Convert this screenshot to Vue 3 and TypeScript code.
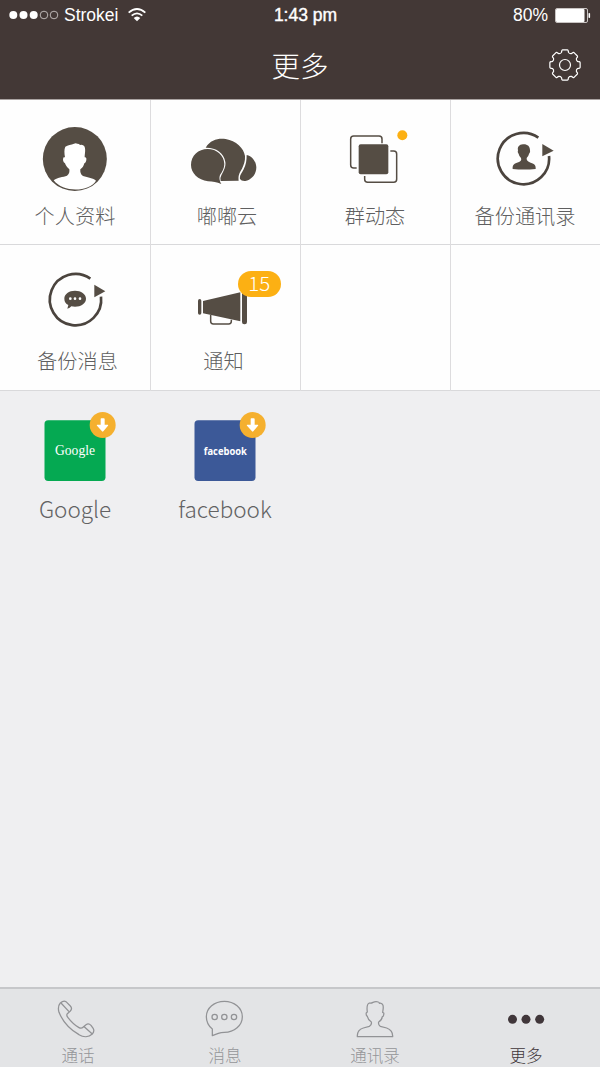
<script setup lang="ts">
interface Item {
  id: string
  label: string
}

const features: Item[] = [
  { id: 'profile', label: '个人资料' },
  { id: 'cloud', label: '嘟嘟云' },
  { id: 'group', label: '群动态' },
  { id: 'contacts', label: '备份通讯录' },
  { id: 'messages', label: '备份消息' },
  { id: 'notice', label: '通知' },
  { id: 'empty-a', label: '' },
  { id: 'empty-b', label: '' },
]

const apps: Item[] = [
  { id: 'google', label: 'Google' },
  { id: 'facebook', label: 'facebook' },
]

const tabs: Item[] = [
  { id: 'calls', label: '通话' },
  { id: 'chats', label: '消息' },
  { id: 'people', label: '通讯录' },
  { id: 'more', label: '更多' },
]

// Outline of the settings gear: eight teeth around a 48-unit centre.
function gearOutline(): string {
  const at = (r: number, deg: number): string => {
    const a = (deg * Math.PI) / 180
    return `${(50 + r * Math.sin(a)).toFixed(1)} ${(50 - r * Math.cos(a)).toFixed(1)}`
  }
  const parts: string[] = []
  for (let i = 0; i < 8; i++) {
    const c = i * 45
    parts.push(`${i === 0 ? 'M' : 'L'}${at(39, c - 16)}`)
    parts.push(`Q${at(41, c - 14)} ${at(42, c - 13.5)}`)
    parts.push(`Q${at(46, c - 13)} ${at(46, c - 9)}`)
    parts.push(`L${at(46, c + 9)}`)
    parts.push(`Q${at(46, c + 13)} ${at(42, c + 13.5)}`)
    parts.push(`Q${at(41, c + 14)} ${at(39, c + 16)}`)
    parts.push(`Q${at(36, c + 22.5)} ${at(39, c + 29)}`)
  }
  return parts.join(' ') + 'Z'
}
const gear = gearOutline()
</script>

<template>
  <div class="screen">
    <header class="header">
      <div class="status">
        <div class="carrier">
          <svg class="signal" width="50" height="10" viewBox="0 0 50 10">
            <circle cx="4.3" cy="5" r="4" fill="#fff" />
            <circle cx="14.5" cy="5" r="4" fill="#fff" />
            <circle cx="24.7" cy="5" r="4" fill="#fff" />
            <circle cx="35" cy="5" r="3.8" class="hollow" />
            <circle cx="45" cy="5" r="3.8" class="hollow" />
          </svg>
          <span class="carrier-name">Strokei</span>
          <svg class="wifi" width="18" height="14" viewBox="0 0 54 42">
            <path d="M2 14Q27 -8 52 14" class="wave" />
            <path d="M11 23Q27 9 43 23" class="wave" />
            <path d="M17 30Q27 21 37 30L27 40Z" fill="#fff" />
          </svg>
        </div>
        <span class="time">1:43 pm</span>
        <div class="power">
          <span>80%</span>
          <svg class="battery" width="36" height="15" viewBox="0 0 36 15">
            <rect x="0.5" y="0.5" width="32" height="14" rx="1.5" class="shell" />
            <rect x="1" y="1" width="28.5" height="13" rx="1" fill="#fff" />
            <path d="M34 5q1.7 2.500 5z" fill="#fff" />
            <rect x="33.500" y="5" width="1.600" height="5" rx="0.800" fill="#fff" />
          </svg>
        </div>
      </div>
      <div class="title-bar">
        <h1>更多</h1>
        <svg class="gear" width="34" height="34" viewBox="-1 -1 102 102">
          <path :d="gear" />
          <circle cx="50" cy="50" r="16.500" />
        </svg>
      </div>
    </header>

    <main class="features">
      <div v-for="f in features" :key="f.id" class="cell" :class="f.id">
        <svg class="art" width="150" height="100" viewBox="0 0 450 300">
          <g v-if="f.id === 'profile'">
            <circle cx="224.500" cy="177" r="96" fill="#554d44" />
            <path
              fill="#fff"
              d="M161 241C170 233 190 231 201 227C208 223 209 215 208 208C201 202 197 196 195 190C189 186 188 179 190 173C192 171 194 172 195 172C193 160 192 148 196 140C203 134 214 135 222 131Q227 129 232 131Q238 131 240 135Q249 133 253 139C258 148 254 162 254 172C258 171 260 174 259 180C258 186 256 189 253 190C251 198 248 203 241 208C240 216 242 224 249 228C264 233 280 234 288 242C270 275 190 280 161 241Z"
            />
          </g>
          <g v-else-if="f.id === 'cloud'" fill="#554d44">
            <path d="M167 143C182 117 208 114 227 117C258 122 282 145 285 168C286 183 282 193 276 206C268 219 264 226 266 242L212 243Q209 235 214 226C222 211 228 199 226 186C222 157 196 142 167 143Z" />
            <path d="M290 165C307 169 318 184 319 202C319 223 305 239 286 243Q274 244 270 237C268 226 275 220 281 208C288 194 290 181 290 165Z" />
            <path d="M173 147C200 147 222 166 223 192C223 205 217 215 210 225Q205 238 214 252C200 246 189 245 174 244C144 240 123 219 123 195C123 167 145 147 173 147Z" />
          </g>
          <g v-else-if="f.id === 'group'">
            <path class="line4" d="M246 130V117Q246 108 237 108H161Q152 108 152 117V195Q152 204 161 204H170" />
            <path class="line4" d="M271 153H281Q290 153 290 162V238Q290 247 281 247H203Q194 247 194 238V228" />
            <rect x="176" y="133" width="89" height="90" rx="6" fill="#554d44" />
            <circle cx="307" cy="106" r="15" fill="#fcb013" />
          </g>
          <g v-else-if="f.id === 'contacts'">
            <path class="ring" d="M265 113A77 77 0 1 0 297 168" />
            <path class="ink" d="M277 132L311 152L277 169Z" />
            <path
              class="ink"
              d="M188 207C187 195 193 190 205 187C213 184 215 180 213 174Q207 168 206 162Q201 158 204 151C202 141 207 134 219 133C232 132 240 139 240 151Q242 158 237 162Q235 170 230 174C229 181 233 185 242 188C254 191 258 196 257 207Q222 210 188 207Z"
            />
          </g>
          <g v-else-if="f.id === 'messages'">
            <path class="ring" d="M271 101A77 77 0 1 0 303 155" />
            <path class="ink" d="M283 119L316 139L283 157Z" />
            <path class="ink" d="M225 137C243 137 258 147 258 161C258 175 243 185 225 185Q219 185 214 184Q210 189 202 191L205 180Q193 174 193 161C193 147 207 137 225 137Z" />
            <circle cx="211" cy="161" r="4" fill="#fff" />
            <circle cx="225" cy="161" r="4" fill="#fff" />
            <circle cx="240" cy="161" r="4" fill="#fff" />
          </g>
          <g v-else-if="f.id === 'notice'">
            <rect x="144" y="162" width="10" height="47" rx="5" class="ink" />
            <path class="ink" d="M159 168L271 142V229L159 205Z" />
            <rect x="276" y="136" width="15" height="102" rx="7" class="ink" />
            <path class="line4" d="M182 210V229Q182 237 190 237H236Q244 237 244 229V224" />
            <rect x="264" y="78" width="129" height="78" rx="39" fill="#fcb013" />
            <text x="328" y="138" class="count" textLength="66" lengthAdjust="spacingAndGlyphs">15</text>
          </g>
        </svg>
        <span class="label">{{ f.label }}</span>
      </div>
    </main>

    <section class="apps">
      <div v-for="a in apps" :key="a.id" class="app" :class="a.id">
        <svg width="150" height="96" viewBox="0 0 450 288">
          <rect x="133.500" y="76" width="183" height="182" rx="11" :fill="a.id === 'google' ? '#05a952' : '#3c5998'" />
          <text v-if="a.id === 'google'" x="225" y="180" class="google-mark" textLength="120" lengthAdjust="spacingAndGlyphs">Google</text>
          <text v-else x="226" y="181" class="facebook-mark" textLength="129" lengthAdjust="spacingAndGlyphs">facebook</text>
          <circle cx="308" cy="90" r="39" fill="#f5b02f" />
          <path d="M302 72Q302 70 304 70H311Q314 70 314 72V89H323Q326 89 324 92L310 109Q308 111 306 109L291 92Q289 89 292 89H302Z" fill="#fff" />
        </svg>
        <span class="app-label">{{ a.label }}</span>
      </div>
    </section>

    <nav class="tabs">
      <div v-for="t in tabs" :key="t.id" class="tab" :class="t.id">
        <svg width="150" height="55" viewBox="0 27 450 165">
          <g v-if="t.id === 'calls'" class="outline">
            <path d="M181 69Q191 60 198 65L211 78Q218 85 211 93L202 101Q198 106 204 113C214 126 226 137 237 143Q244 147 250 141L258 134Q266 129 273 136L280 146Q284 154 277 162C266 172 250 172 237 164C207 147 188 124 177 97Q172 79 181 69Z" />
            <path d="M183 69L207 95M251 139L276 161" />
          </g>
          <g v-else-if="t.id === 'chats'" class="outline">
            <path d="M223 64C253 64 277 84 277 110C277 136 253 157 223 157Q213 157 205 160L187 167L187 147C175 137 169 124 169 110C169 84 193 64 223 64Z" />
            <circle cx="194" cy="111" r="8" />
            <circle cx="223" cy="111" r="8" />
            <circle cx="252" cy="111" r="8" />
          </g>
          <g v-else-if="t.id === 'people'" class="outline">
            <path d="M172 170C171 155 177 148 190 144L208 139Q216 135 214 126C206 121 203 114 202 109Q197 106 199 98L202 96C200 82 200 72 208 69Q214 70 219 67Q227 63 235 66Q238 67 238 70Q246 68 249 76C251 83 249 89 248 97Q253 98 251 104Q251 109 247 110C246 117 242 123 236 126Q234 135 241 139L260 144C273 149 279 155 278 170Z" />
          </g>
          <g v-else fill="#40363a">
            <circle cx="187.500" cy="118" r="13.500" />
            <circle cx="228" cy="118" r="13.500" />
            <circle cx="269" cy="118" r="13.500" />
          </g>
        </svg>
        <span class="tab-label">{{ t.label }}</span>
      </div>
    </nav>
  </div>
</template>

<style>
body {
  background: #efeff1;
}
</style>

<style scoped>
.screen {
  width: 600px;
  height: 1067px;
  display: flex;
  flex-direction: column;
  overflow: hidden;
  background: #efeff1;
  font-family: "Noto Sans CJK SC", sans-serif;
}
.header {
  height: 99px;
  flex: none;
  background: #433836;
  border-bottom: 1px solid #aaa3a2;
  color: #fff;
}
.status {
  height: 30px;
  display: grid;
  grid-template-columns: 1fr auto 1fr;
  align-items: center;
  padding: 0 9px;
  font: 17.5px/30px "Liberation Sans", sans-serif;
}
.carrier,
.power {
  display: flex;
  align-items: center;
}
.power {
  justify-content: flex-end;
}
.signal {
  margin-right: 5px;
}
.hollow {
  fill: none;
  stroke: #d8d3d2;
  stroke-width: 0.8;
}
.wifi {
  margin-left: 10px;
}
.wave {
  fill: none;
  stroke: #fff;
  stroke-width: 5.5;
}
.time {
  position: relative;
  left: 5.5px;
  -webkit-text-stroke: 0.4px #fff;
}
.battery {
  margin-left: 7px;
}
.shell {
  fill: none;
  stroke: #c9c4c3;
}
.title-bar {
  height: 69px;
  display: grid;
  grid-template-columns: 1fr auto 1fr;
  align-items: center;
}
h1 {
  grid-column: 2;
  margin: 0;
  font-size: 28.5px;
  line-height: 40px;
  font-weight: 300;
}
.gear {
  justify-self: end;
  margin-right: 18px;
  fill: none;
  stroke: #fff;
  stroke-width: 3.6;
  stroke-linejoin: round;
}
.features {
  flex: none;
  display: grid;
  grid-template: 145px 146px / repeat(4, 150px);
  background: #fefefe;
}
.cell {
  display: flex;
  flex-direction: column;
  align-items: center;
  box-shadow: inset 1px 0 #dddcde, inset 0 -1px #d9d9db;
}
.cell:nth-child(4n + 1) {
  box-shadow: inset 0 -1px #d9d9db;
}
.label {
  margin-top: 1px;
  font-size: 20.200px;
  line-height: 30px;
  font-weight: 300;
  color: #5f5f60;
}
.cloud .label {
  padding-left: 4px;
}
.messages .label {
  padding-left: 5px;
}
.notice .label {
  padding-right: 3px;
}
.line4 {
  fill: none;
  stroke: #554d44;
  stroke-width: 4.5;
}
.ring {
  fill: none;
  stroke: #4b443e;
  stroke-width: 8;
}
.ink {
  fill: #554d44;
}
.count {
  font: 300 60px "Noto Sans CJK SC", sans-serif;
  fill: #fff;
  text-anchor: middle;
}
.apps {
  flex: 1;
  display: flex;
  align-items: flex-start;
  padding-top: 4px;
}
.app {
  width: 150px;
  display: flex;
  flex-direction: column;
  align-items: center;
}
.google-mark {
  font: 44px "Liberation Serif", serif;
  fill: #fff;
  text-anchor: middle;
}
.facebook-mark {
  font: bold 34px "Open Sans", sans-serif;
  fill: #fff;
  text-anchor: middle;
}
.app-label {
  font-size: 22.500px;
  line-height: 34px;
  font-weight: 300;
  color: #626263;
}
.tabs {
  height: 78px;
  flex: none;
  display: flex;
  background: #e3e4e6;
  border-top: 2px solid #c6c7ca;
}
.tab {
  width: 150px;
  display: flex;
  flex-direction: column;
  align-items: center;
  color: #949598;
}
.outline {
  fill: none;
  stroke: #929396;
  stroke-width: 3.8;
  stroke-linejoin: round;
}
.tab-label {
  font-size: 16.500px;
  line-height: 22px;
  font-weight: 300;
}
.calls .tab-label {
  padding-left: 6px;
}
.more {
  color: #40363a;
}
.more .tab-label {
  padding-left: 2px;
}
</style>
